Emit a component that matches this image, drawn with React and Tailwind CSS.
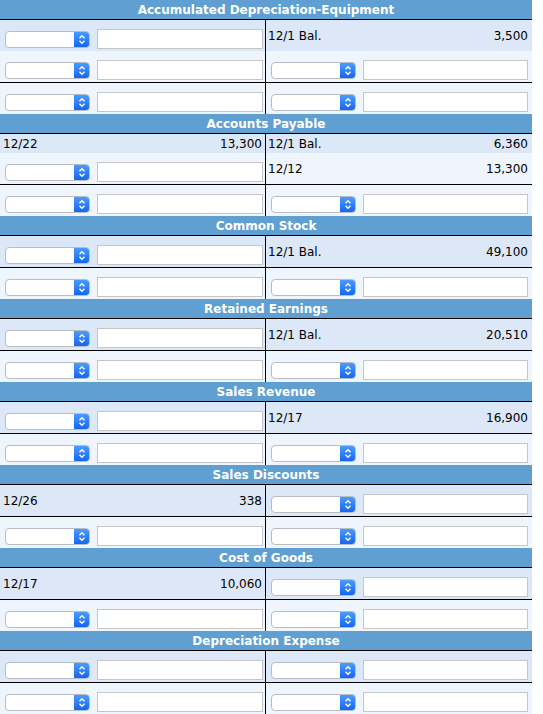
import React from 'react';

const I = 'input';
const T = (date, amt) => ({ date, amt });

const sections = [
  {
    title: 'Accumulated Depreciation-Equipment',
    rows: [[I, T('12/1 Bal.', '3,500')], [I, I]],
  },
  {
    title: 'Accounts Payable',
    rows: [[T('12/22', '13,300'), T('12/1 Bal.', '6,360')], [I, T('12/12', '13,300')]],
  },
  { title: 'Common Stock', rows: [[I, T('12/1 Bal.', '49,100')]] },
  { title: 'Retained Earnings', rows: [[I, T('12/1 Bal.', '20,510')]] },
  { title: 'Sales Revenue', rows: [[I, T('12/17', '16,900')]] },
  { title: 'Sales Discounts', rows: [[T('12/26', '338'), I]] },
  { title: 'Cost of Goods', rows: [[T('12/17', '10,060'), I]] },
  { title: 'Depreciation Expense', rows: [[I, I]] },
];

const FakeSelect = () => (
  <div className="flex h-[17px] w-[85px] shrink-0 overflow-hidden rounded-[4px] border border-[#b8bcc4] bg-white">
    <div className="flex-1" />
    <div className="flex w-[15px] items-center justify-center bg-gradient-to-b from-[#4b9bff] to-[#1565f2]">
      <svg width="8" height="11" viewBox="0 0 8 11" fill="none" stroke="white" strokeWidth="1.4">
        <path d="M1.5 4.2 L4 1.7 L6.5 4.2" />
        <path d="M1.5 6.8 L4 9.3 L6.5 6.8" />
      </svg>
    </div>
  </div>
);

const InputCell = ({ right }) => (
  <div className={`flex h-full items-center gap-[7px] pt-[9px] pb-[2px] pl-[5px] ${right ? 'pr-[4px]' : 'pr-[2px]'}`}>
    <FakeSelect />
    <div className="h-[20px] flex-1 border border-[#c6c6c6] bg-white" />
  </div>
);

const TextCell = ({ cell, right }) => (
  <div className={`flex h-full items-center justify-between ${right ? 'pl-[2px] pr-[4px]' : 'pl-[3px] pr-[3px]'}`}>
    <span>{cell.date}</span>
    <span>{cell.amt}</span>
  </div>
);

const Cell = ({ cell, right }) =>
  cell === I ? <InputCell right={right} /> : <TextCell cell={cell} right={right} />;

const Row = ({ cells, bg, top }) => {
  const hasInput = cells.some((c) => c === I);
  return (
    <div className={`flex ${bg} ${top ? 'border-t border-black' : ''}`}>
      <div className={`w-[266px] border-r border-black ${hasInput ? 'h-[31px]' : 'h-[19px]'}`}>
        <Cell cell={cells[0]} />
      </div>
      <div className={`w-[266px] ${hasInput ? 'h-[31px]' : 'h-[19px]'}`}>
        <Cell cell={cells[1]} right />
      </div>
    </div>
  );
};

export default function App() {
  return (
    <div className="w-[532px] font-['DejaVu_Sans',Verdana,sans-serif] text-[12px] leading-[14px] text-black">
      {sections.map((s) => (
        <div key={s.title}>
          <div className="flex h-[19px] items-center justify-center bg-[#5f9fd1] font-bold text-white">
            {s.title}
          </div>
          <div className="border-t border-black">
            {s.rows.map((r, i) => (
              <Row key={i} cells={r} bg={i === 0 ? 'bg-[#dce8f7]' : 'bg-[#eef5fd]'} />
            ))}
            <Row cells={[I, I]} bg="bg-[#eef5fd]" top />
          </div>
        </div>
      ))}
    </div>
  );
}
